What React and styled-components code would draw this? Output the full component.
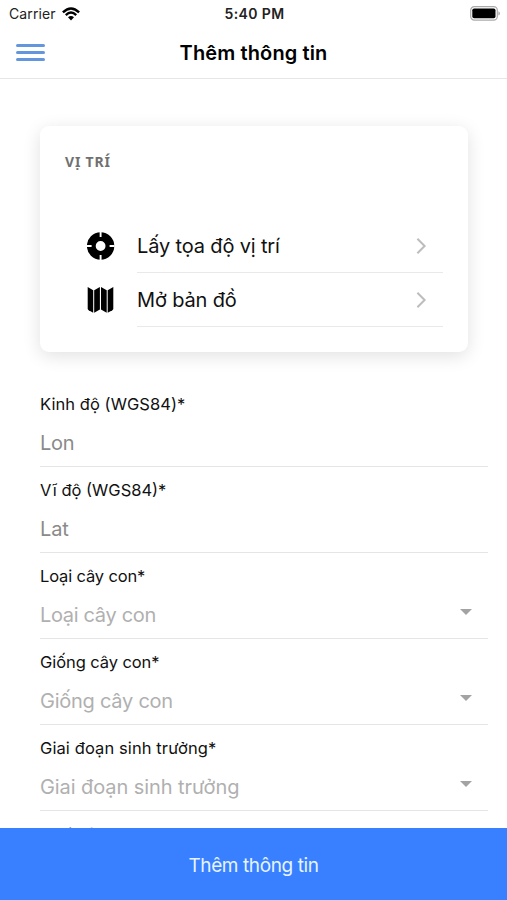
import React from "react"
import styled, { createGlobalStyle } from "styled-components"

const fields = [
    { label: "Kinh độ (WGS84)*", value: "Lon", labelSpacing: 0.06, valueSpacing: -0.25 },
    { label: "Vĩ độ (WGS84)*", value: "Lat", labelSpacing: 0, valueSpacing: -0.1 },
    { label: "Loại cây con*", value: "Loại cây con", labelSpacing: -0.15, valueSpacing: -0.33, select: true },
    { label: "Giống cây con*", value: "Giống cây con", labelSpacing: -0.08, valueSpacing: -0.25, select: true },
    { label: "Giai đoạn sinh trưởng*", value: "Giai đoạn sinh trưởng", labelSpacing: 0.1, valueSpacing: -0.08, select: true },
    { label: "Loại bệnh*", value: "Loại bệnh", labelSpacing: -0.1, valueSpacing: -0.25, select: true },
]

const WifiIcon = () => (
    <svg width="18" height="14" viewBox="0 0 18 14" fill="none" stroke="#000" strokeWidth="2.4">
        <path d="M0.9 5.3 Q9 -2.5 17.1 5.3" />
        <path d="M3.8 8.1 Q9 3.1 14.2 8.1" />
        <path d="M6 10.3 Q9 7.5 12 10.3 L9 13.4Z" fill="#000" stroke="none" />
    </svg>
)

const BatteryIcon = () => (
    <svg width="30" height="15" viewBox="0 0 30 15">
        <rect x="0.7" y="0.7" width="26.6" height="13.4" rx="3.6" fill="#fff" stroke="#aaa" strokeWidth="1.2" />
        <rect x="2.3" y="2.5" width="23.2" height="9.8" rx="1.8" fill="#000" />
        <path d="M28.4 5.2 Q30 6 30 7.4 Q30 8.8 28.4 9.6Z" fill="#aaa" />
    </svg>
)

const LocateIcon = () => (
    <svg width="28" height="28" viewBox="0 0 28 28">
        <circle cx="13.6" cy="14" r="9.3" fill="none" stroke="#000" strokeWidth="8.8" />
        <path d="M13.6 0V5M13.6 23V28M-0.4 14H4.6M22.6 14H27.6" stroke="#fff" strokeWidth="1.9" />
    </svg>
)

const MapIcon = () => (
    <svg width="28" height="28" viewBox="0 0 28 28" fill="#000">
        <path d="M0.7 1 L6.2 4.3 V26.8 L1.7 24.2 Q0.7 23.6 0.7 22.6Z" />
        <path d="M7.2 4.3 L12.9 1 V23.5 L7.2 26.8Z" />
        <path d="M14 1 L19.7 4.3 V26.8 L14 23.5Z" />
        <path d="M20.7 4.3 L26.3 1 V22.6 Q26.3 23.6 25.3 24.2 L20.7 26.8Z" />
    </svg>
)

const Chevron = () => (
    <svg width="12" height="18" viewBox="0 0 12 18" fill="none" stroke="#bdbdbd" strokeWidth="2">
        <path d="M2.4 1.8 L9.6 9 L2.4 16.2" />
    </svg>
)

const App = () => {
    return (
        <Page>
            <GlobalStyle />
            <StatusBar>
                <Carrier>Carrier <WifiIcon /></Carrier>
                <Time>5:40 PM</Time>
                <Battery><BatteryIcon /></Battery>
            </StatusBar>
            <Header>
                <MenuButton aria-label="Menu"><Bar /><Bar /><Bar /></MenuButton>
                <Title>Thêm thông tin</Title>
            </Header>
            <Content>
                <Card>
                    <CardTitle>VỊ TRÍ</CardTitle>
                    <Item>
                        <LocateIcon />
                        <ItemBody><ItemText>Lấy tọa độ vị trí</ItemText><Chevron /></ItemBody>
                    </Item>
                    <Item>
                        <MapIcon />
                        <ItemBody><ItemText>Mở bản đồ</ItemText><Chevron /></ItemBody>
                    </Item>
                </Card>
                <Form>
                    {fields.map((f) => (
                        <Field key={f.label}>
                            <Label $spacing={f.labelSpacing}>{f.label}</Label>
                            <Value $select={f.select} $spacing={f.valueSpacing}>
                                {f.value}
                                {f.select && <Caret />}
                            </Value>
                        </Field>
                    ))}
                </Form>
            </Content>
            <Submit>Thêm thông tin</Submit>
        </Page>
    )
}

export default App


const GlobalStyle = createGlobalStyle`
* {
  box-sizing: border-box;
}
body {
  margin: 0;
  background: #fff;
}
`;
const Page = styled.div`
width: 100%;
height: 100vh;
display: flex;
flex-direction: column;
overflow: hidden;
background: #fff;
color: #111;
font-family: Inter, "Liberation Sans", sans-serif;
`;
const StatusBar = styled.div`
height: 27px;
flex: none;
padding: 0 7px 0 9px;
display: grid;
grid-template-columns: 1fr auto 1fr;
align-items: center;
`;
const Carrier = styled.div`
display: flex;
align-items: center;
gap: 6px;
font-size: 14px;
letter-spacing: 0.1px;
color: #222;
`;
const Time = styled.div`
font-size: 14px;
font-weight: 600;
letter-spacing: 0.4px;
color: #222;
`;
const Battery = styled.div`
display: flex;
justify-content: flex-end;
`;
const Header = styled.header`
height: 52px;
flex: none;
padding: 0 16px;
border-bottom: 1px solid #e6e6e6;
display: grid;
grid-template-columns: 1fr auto 1fr;
align-items: center;
`;
const MenuButton = styled.button`
width: 29px;
padding: 0;
border: 0;
background: none;
display: flex;
flex-direction: column;
gap: 4px;
`;
const Bar = styled.span`
width: 100%;
height: 3px;
border-radius: 1.5px;
background: #6496dd;
`;
const Title = styled.h1`
margin: 0;
font-size: 20px;
font-weight: 600;
letter-spacing: 0.12px;
color: #000;
white-space: nowrap;
`;
const Content = styled.main`
flex: 1;
min-height: 0;
overflow: hidden;
padding: 47px 19px 0 40px;
`;
const Card = styled.section`
width: 428px;
height: 226px;
padding: 25px 25px 0;
border-radius: 9px;
background: #fff;
box-shadow: 0 4px 18px rgba(0, 0, 0, 0.12);
`;
const CardTitle = styled.h2`
height: 68px;
margin: 0;
font-family: "Noto Sans", sans-serif;
font-size: 14px;
font-weight: 700;
line-height: 21px;
letter-spacing: 0.8px;
color: #707070;
`;
const Item = styled.div`
height: 54px;
padding-left: 22px;
display: flex;
align-items: center;
gap: 22px;
`;
const ItemBody = styled.div`
flex: 1;
height: 100%;
padding-right: 16px;
border-bottom: 1px solid #e9e9e9;
display: flex;
align-items: center;
justify-content: space-between;
`;
const ItemText = styled.span`
font-size: 20px;
letter-spacing: -0.15px;
color: #111;
`;
const Form = styled.form`
padding-top: 29px;
`;
const Field = styled.div`
height: 86px;
border-bottom: 1px solid #e5e5e5;
`;
const Label = styled.div`
padding-top: 12px;
font-size: 16.5px;
line-height: 22px;
letter-spacing: ${(p) => p.$spacing}px;
color: #111;
`;
const Value = styled.div`
margin-top: 15px;
padding-right: 16px;
display: flex;
align-items: center;
justify-content: space-between;
font-size: 20px;
line-height: 26px;
letter-spacing: ${(p) => p.$spacing}px;
color: ${(p) => (p.$select ? "#b0b0b0" : "#8a8a8a")};
`;
const Caret = styled.span`
margin-bottom: 6px;
border: 6px solid transparent;
border-top-color: #a3a3a3;
border-bottom: 0;
`;
const Submit = styled.button`
height: 72px;
flex: none;
border: 0;
padding-top: 3px;
background: #3880ff;
color: #e6f4ff;
font-family: inherit;
font-size: 19px;
letter-spacing: -0.4px;
`;
